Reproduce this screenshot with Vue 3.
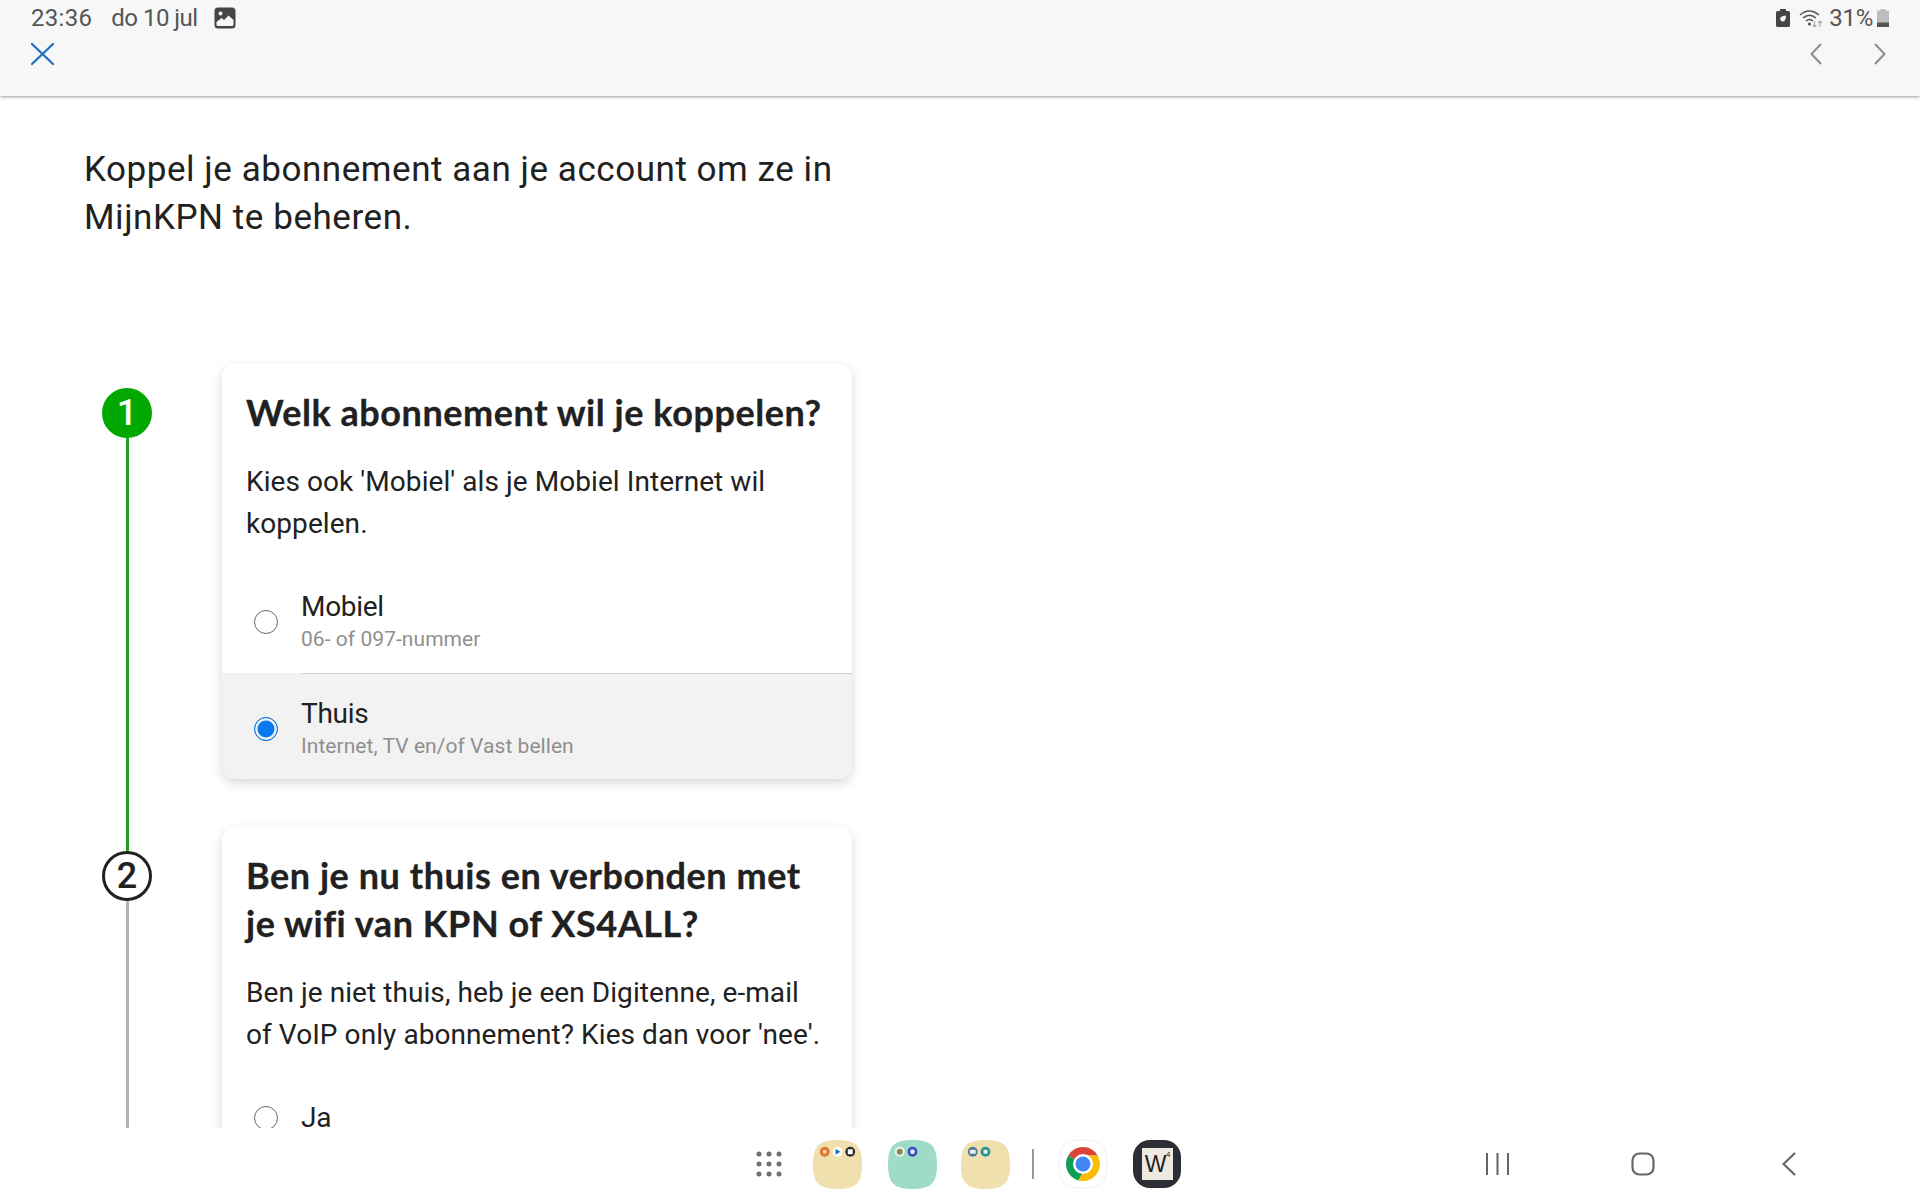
<script setup>
const steps = [
  {
    n: 1, done: true, title: 'Welk abonnement wil je koppelen?',
    text: "Kies ook 'Mobiel' als je Mobiel Internet wil koppelen.",
    options: [
      { label: 'Mobiel', sub: '06- of 097-nummer' },
      { label: 'Thuis', sub: 'Internet, TV en/of Vast bellen', on: true },
    ],
  },
  {
    n: 2, done: false, title: 'Ben je nu thuis en verbonden met je wifi van KPN of XS4ALL?',
    text: "Ben je niet thuis, heb je een Digitenne, e-mail of VoIP only abonnement? Kies dan voor 'nee'.",
    options: [
      { label: 'Ja', sub: '' },
      { label: 'Nee', sub: '' },
    ],
  },
]
const dots = [9, 19, 29].flatMap((x) => [10, 20, 30].map((y) => ({ x, y })))
</script>

<template>
  <div class="screen">
    <header class="head">
      <div class="status">
        <div class="status-left">
          <span class="time">23:36</span>
          <span class="date">do 10 jul</span>
          <svg class="pic" width="22" height="22" viewBox="0 0 22 22">
            <rect x="0.5" y="0.5" width="21" height="21" rx="3.5" fill="#454545" />
            <circle cx="6.5" cy="6.5" r="2" fill="#f7f7f7" />
            <path d="M2.5 17.5 L2.5 15 L7.5 11 L10 13 L14.5 8.5 L19.5 13 L19.5 17.5 Q19.5 19 18 19 L4 19 Q2.5 19 2.5 17.5Z" fill="#f7f7f7" />
          </svg>
        </div>
        <div class="status-right">
          <svg width="14" height="18" viewBox="0 0 14 18">
            <path d="M4 0 H10 V2 H12.5 Q14 2 14 3.5 V16.5 Q14 18 12.5 18 H1.5 Q0 18 0 16.5 V3.5 Q0 2 1.5 2 H4Z" fill="#454545" />
            <path d="M4 10 Q4 7 10 6.5 Q10 12.5 6.5 12.5 Q5 12.5 4 10Z" fill="#f7f7f7" />
          </svg>
          <svg class="wifi" width="24" height="20" viewBox="0 0 24 20" fill="none">
            <path d="M1 7 Q10 -1 20 7" stroke="#555" stroke-width="1.6" />
            <path d="M4 10 Q10.500 4.500 17 10" stroke="#555" stroke-width="1.6" />
            <path d="M7 13 Q10.500 10 14 13" stroke="#555" stroke-width="1.6" />
            <circle cx="10.500" cy="16" r="1.600" fill="#555" />
            <path d="M15.500 13 V19 M13.500 17 L15.500 19 L17.500 17" stroke="#aaa" stroke-width="1.200" />
            <path d="M21 19 V13 M19 15 L21 13 L23 15" stroke="#aaa" stroke-width="1.200" />
          </svg>
          <span class="pct">31%</span>
          <svg width="12" height="18" viewBox="0 0 12 18">
            <path d="M3.500 0 H8.500 V1.500 H12 V18 H0 V1.500 H3.500Z" fill="#bdbdbd" />
            <rect y="13.500" width="12" height="4.500" fill="#555" />
          </svg>
        </div>
      </div>
      <div class="tools">
        <svg width="24" height="24" viewBox="0 0 24 24" fill="none">
          <path d="M1 2 L22 22 M22 2 L1 22" stroke="#1b6fc2" stroke-width="2.200" stroke-linecap="round" />
        </svg>
        <div class="arrows">
          <svg width="12" height="22" viewBox="0 0 12 22" fill="none">
            <path d="M11 1 L1.500 11 L11 21" stroke="#8c8c8c" stroke-width="2" />
          </svg>
          <svg width="12" height="22" viewBox="0 0 12 22" fill="none">
            <path d="M1 1 L10.500 11 L1 21" stroke="#8c8c8c" stroke-width="2" />
          </svg>
        </div>
      </div>
    </header>

    <main class="main">
      <p class="intro">Koppel je abonnement aan je account om ze in MijnKPN te beheren.</p>
      <section v-for="s in steps" :key="s.n" class="step">
        <div class="rail">
          <div class="lead" :class="{ done: s.n > 1 }"></div>
          <div class="num" :class="{ done: s.done }">{{ s.n }}</div>
          <div class="line" :class="{ done: s.done }"></div>
        </div>
        <article class="card">
          <div class="card-body">
            <h2 class="title">{{ s.title }}</h2>
            <p class="text">{{ s.text }}</p>
          </div>
          <div v-for="o in s.options" :key="o.label" class="opt" :class="{ on: o.on, tall: o.sub }">
            <span class="radio"></span>
            <div class="opt-text">
              <div class="label">{{ o.label }}</div>
              <div v-if="o.sub" class="sub">{{ o.sub }}</div>
            </div>
          </div>
        </article>
      </section>
    </main>

    <nav class="nav">
      <svg width="32" height="40" viewBox="0 0 32 40">
        <circle v-for="d in dots" :key="d.x + '-' + d.y" :cx="d.x" :cy="d.y" r="2.500" fill="#6f6f6f" />
      </svg>
      <svg class="folder f1" width="49" height="49" viewBox="0 0 50 50">
        <path d="M25 0 C44 0 50 6 50 25 C50 44 44 50 25 50 C6 50 0 44 0 25 C0 6 6 0 25 0Z" fill="#efe0ae" />
        <circle cx="12" cy="12" r="5" fill="#e0762f" />
        <circle cx="12" cy="12" r="2" fill="#f6d9b8" />
        <circle cx="25" cy="12" r="5" fill="#fff" />
        <path d="M23 9 L28 12 L23 15Z" fill="#1c6fb8" />
        <circle cx="38" cy="12" r="5" fill="#2b2b2b" />
        <rect x="35.500" y="9.500" width="5" height="5" fill="#fff" />
      </svg>
      <svg class="folder f2" width="49" height="49" viewBox="0 0 50 50">
        <path d="M25 0 C44 0 50 6 50 25 C50 44 44 50 25 50 C6 50 0 44 0 25 C0 6 6 0 25 0Z" fill="#9fdcc8" />
        <circle cx="12" cy="12" r="5" fill="#f3f3f3" />
        <circle cx="12" cy="12" r="3" fill="#7a8a4a" />
        <circle cx="25" cy="12" r="5" fill="#3a48c0" />
        <circle cx="25" cy="12" r="2.500" fill="#dfe4ff" />
      </svg>
      <svg class="folder f3" width="49" height="49" viewBox="0 0 50 50">
        <path d="M25 0 C44 0 50 6 50 25 C50 44 44 50 25 50 C6 50 0 44 0 25 C0 6 6 0 25 0Z" fill="#efe0ae" />
        <circle cx="12" cy="12" r="5" fill="#4a7b94" />
        <rect x="9" y="10" width="6" height="4" fill="#e8f0f3" />
        <circle cx="25" cy="12" r="5" fill="#2f8f96" />
        <rect x="23" y="10" width="4" height="4" fill="#e8f5f5" />
      </svg>
      <span class="sep"></span>
      <svg class="chrome" width="50" height="50" viewBox="0 0 50 50">
        <path d="M25 1 C43 1 49 7 49 25 C49 43 43 49 25 49 C7 49 1 43 1 25 C1 7 7 1 25 1Z" fill="#fff" stroke="#f0f0f0" />
        <path d="M25 8 A17 17 0 0 1 39.700 16.500 L25 16.500 A8.500 8.500 0 0 0 17.600 20.800 L10.300 16.500 A17 17 0 0 1 25 8Z" fill="#db4437" />
        <path d="M10.300 16.500 L17.600 20.800 A8.500 8.500 0 0 0 25 33.500 L20.400 41.400 A17 17 0 0 1 10.300 16.500Z" fill="#109d58" />
        <path d="M39.700 16.500 A17 17 0 0 1 20.400 41.400 L25 33.500 A8.500 8.500 0 0 0 32.400 20.800 L25 16.500Z" fill="#fbbc05" />
        <circle cx="25" cy="25" r="10" fill="#fff" />
        <circle cx="25" cy="25" r="7.500" fill="#4285f4" />
      </svg>
      <div class="wordfeud">
        <div class="tile"><span class="w">W</span><span class="pts">4</span></div>
      </div>
      <svg class="recent" width="24" height="24" viewBox="0 0 24 24">
        <path d="M2 1 V23 M12.500 1 V23 M23 1 V23" stroke="#666" stroke-width="2" />
      </svg>
      <svg class="home" width="24" height="24" viewBox="0 0 24 24" fill="none">
        <rect x="1.500" y="1.500" width="21" height="21" rx="7" stroke="#666" stroke-width="2.200" />
      </svg>
      <svg class="back" width="14" height="24" viewBox="0 0 14 24" fill="none">
        <path d="M13 1 L1.500 12 L13 23" stroke="#666" stroke-width="2.200" />
      </svg>
    </nav>
  </div>
</template>

<style scoped>
.screen {
  width: 1920px;
  height: 1200px;
  display: flex;
  flex-direction: column;
  overflow: hidden;
  background: #fff;
  font-family: Roboto, "Liberation Sans", sans-serif;
  color: #212121;
}
.head {
  height: 96px;
  flex: none;
  box-sizing: border-box;
  padding: 4px 31px 0;
  background: #f7f7f7;
  box-shadow: 0 1px 3px rgba(0, 0, 0, 0.4);
  position: relative;
  z-index: 2;
}
.status, .tools, .status-left, .status-right, .arrows { display: flex; align-items: center; }
.status, .tools { justify-content: space-between; }
.status { height: 28px; color: #555; font-size: 24px; }
.status-left { gap: 19px; }
.time { letter-spacing: 0.3px; }
.date { letter-spacing: -0.5px; }
.pic { margin-left: -3px; }
.status-right { gap: 9px; }
.wifi { margin-right: -3px; }
.pct { margin-right: -5px; letter-spacing: -0.3px; }
.tools { height: 24px; margin-top: 10px; padding-right: 3px; }
.arrows { gap: 52px; }
.main {
  flex: 1;
  min-height: 0;
  overflow: hidden;
  padding-left: 84px;
}
.intro {
  width: 770px;
  margin: 50px 0 0;
  height: 218px;
  font-size: 35px;
  line-height: 48px;
  letter-spacing: 0.55px;
}
.step { display: grid; grid-template-columns: 138px 630px; }
.rail { display: flex; flex-direction: column; align-items: center; width: 50px; margin-left: 18px; }
.lead { height: 24px; width: 3px; flex: none; }
.lead.done { background: #1f9e27; }
.num {
  width: 50px;
  height: 50px;
  box-sizing: border-box;
  border: 3px solid #212121;
  border-radius: 50%;
  display: flex;
  align-items: center;
  justify-content: center;
  font-size: 36px;
  font-weight: 500;
  flex: none;
}
.num.done { background: #00a800; border-color: #00a800; color: #fff; }
.line { flex: 1; width: 3px; background: #b3b3b3; }
.line.done { background: #1f9e27; }
.card {
  background: #fff;
  border-radius: 14px;
  box-shadow: 0 4px 12px rgba(0, 0, 0, 0.16);
  overflow: hidden;
  margin-bottom: 48px;
}
.card-body { padding: 24px 24px 24px; }
.title {
  margin: 0;
  font-family: Lato, Inter, sans-serif;
  font-size: 36px;
  line-height: 48px;
  font-weight: 700;
  letter-spacing: 0.55px;
  -webkit-text-stroke: 0.3px #212121;
}
.text {
  margin: 25px 0 0;
  font-size: 28px;
  line-height: 41.5px;
  letter-spacing: 0.07px;
}
.opt {
  height: 78px;
  display: flex;
  align-items: center;
  gap: 23px;
  padding-left: 32px;
  box-sizing: border-box;
  position: relative;
}
.opt.tall { height: 105px; padding-top: 3px; }
.opt.tall.on { height: 106px; padding-top: 5px; }
.opt + .opt::before {
  content: "";
  position: absolute;
  left: 79px;
  right: 0;
  top: 0;
  height: 1px;
  background: #cfcfcf;
}
.opt.on { background: #f2f2f2; }
.radio {
  width: 24px;
  height: 24px;
  box-sizing: border-box;
  border: 1.500px solid #666;
  border-radius: 50%;
  flex: none;
}
.on .radio {
  border-color: #0a72e0;
  background: #0a78f0;
  box-shadow: inset 0 0 0 2.500px #f2f2f2;
}
.label { font-size: 28px; line-height: 34px; letter-spacing: -0.3px; }
.sub { font-size: 21px; line-height: 30px; color: #8f8f8f; letter-spacing: 0.05px; }
.nav {
  height: 72px;
  flex: none;
  background: #fff;
  display: flex;
  align-items: center;
  padding-left: 750px;
  position: relative;
  z-index: 1;
}
.f1 { margin-left: 31px; }
.f2 { margin-left: 26px; }
.f3 { margin-left: 24px; }
.sep { width: 2px; height: 30px; background: #999; margin-left: 22px; }
.chrome { margin-left: 24px; }
.wordfeud {
  width: 48px;
  height: 48px;
  margin-left: 25px;
  border-radius: 17px;
  background: #2c2e35;
  display: flex;
  align-items: center;
  justify-content: center;
}
.tile {
  width: 31px;
  height: 32px;
  background: #eeeae2;
  position: relative;
  display: flex;
  align-items: center;
  justify-content: center;
  color: #222;
}
.w { font-family: "Liberation Sans", sans-serif; font-size: 23px; line-height: 32px; margin-right: 3px; }
.pts { position: absolute; font-family: "Liberation Sans", sans-serif; top: 2px; right: 2px; font-size: 8px; line-height: 10px; }
.recent { margin-left: 304px; }
.home { margin-left: 122px; }
.back { margin-left: 127px; }
</style>

<style>
html, body { margin: 0; background: #fff; }
</style>
